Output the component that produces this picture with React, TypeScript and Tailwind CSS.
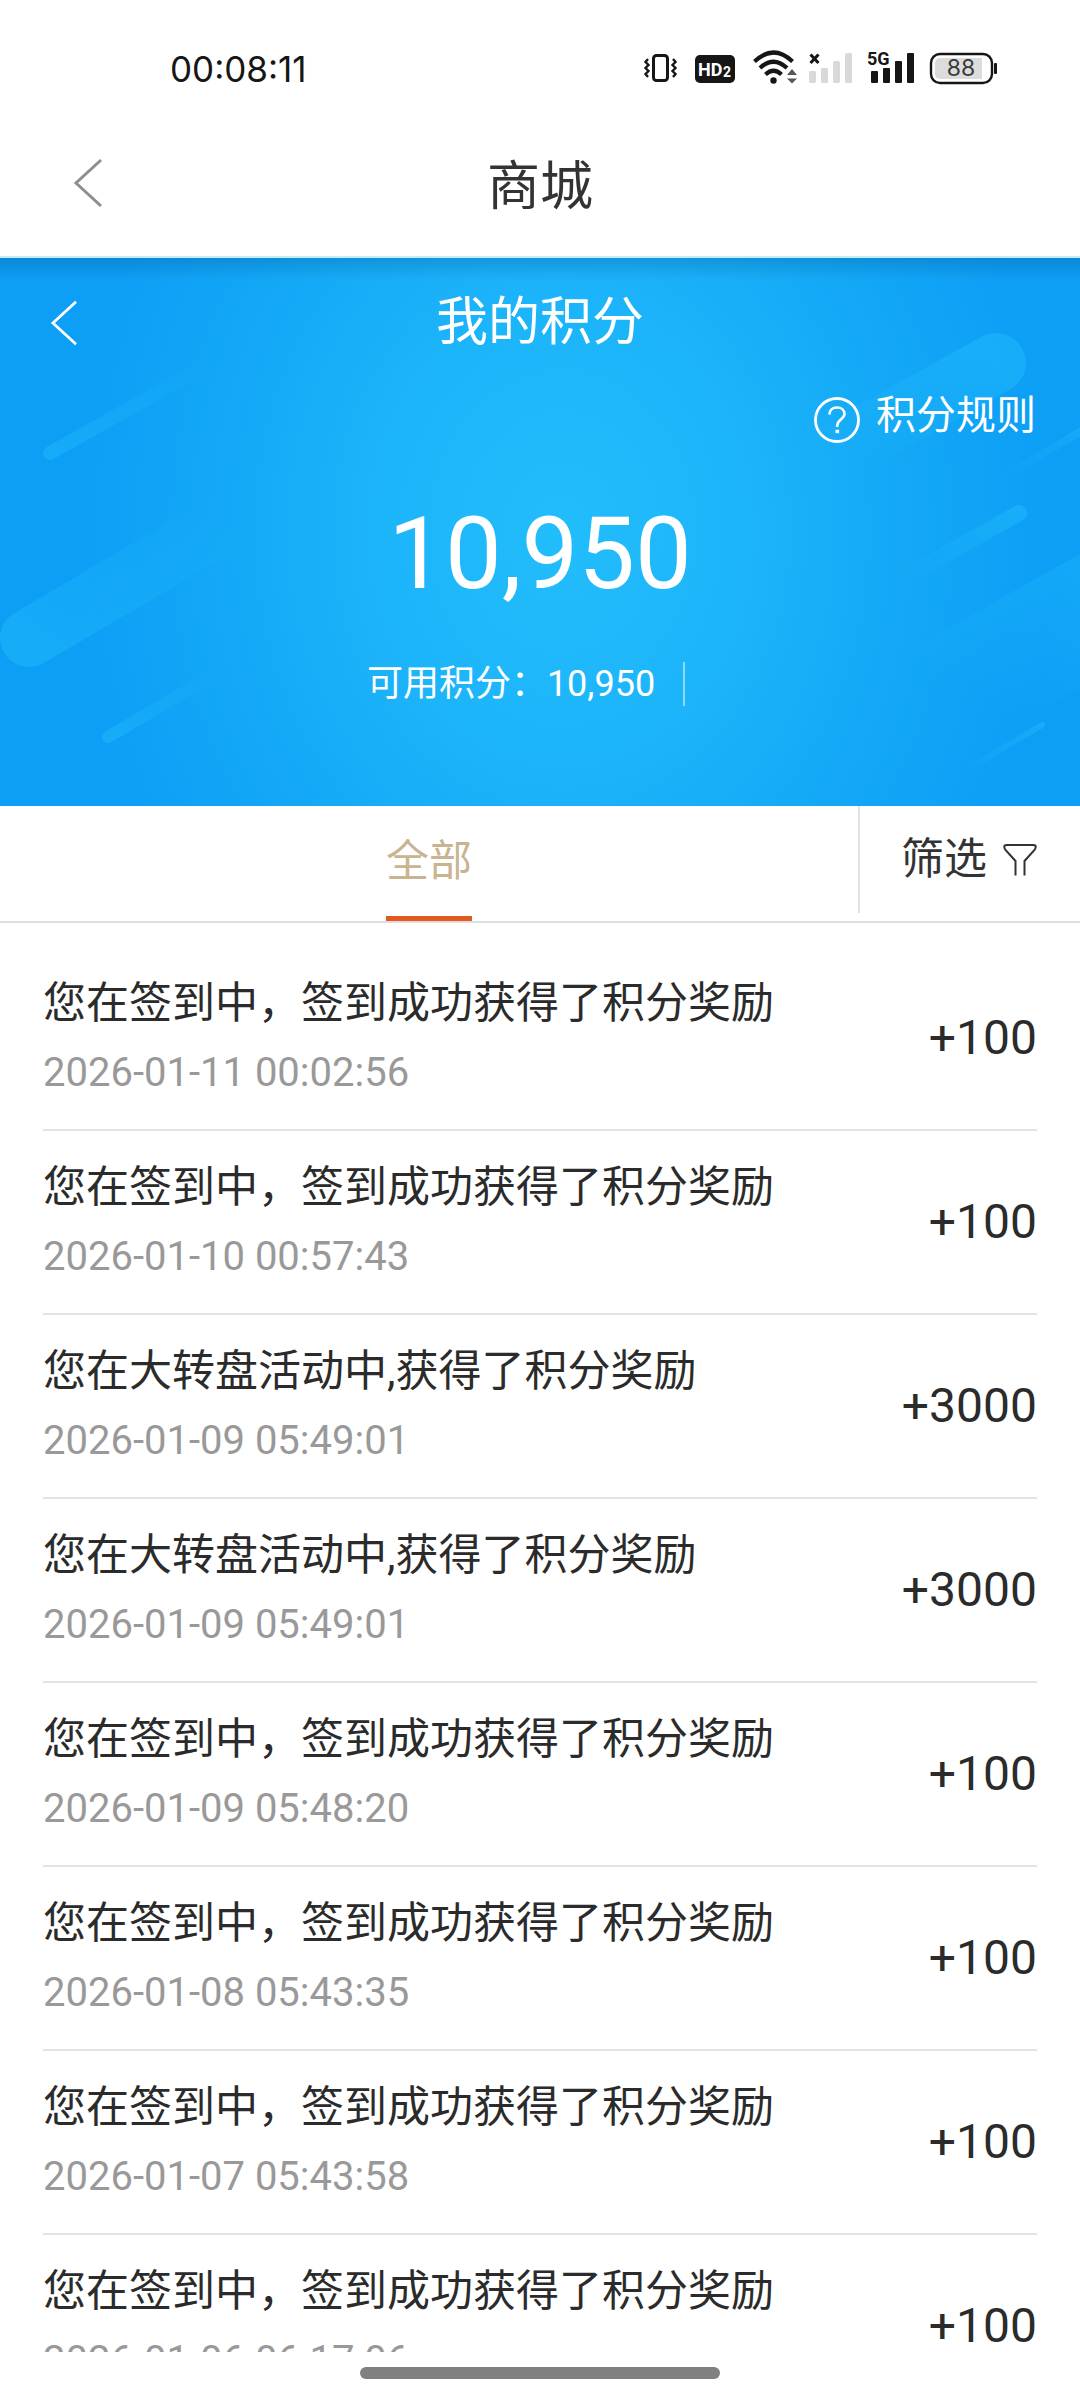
interface PointRecord {
  id: number;
  title: string;
  time: string;
  amount: number;
}

const SIGN_IN = '您在签到中，签到成功获得了积分奖励';
const WHEEL = '您在大转盘活动中,获得了积分奖励';

const records: PointRecord[] = [
  { id: 1, title: SIGN_IN, time: '2026-01-11 00:02:56', amount: 100 },
  { id: 2, title: SIGN_IN, time: '2026-01-10 00:57:43', amount: 100 },
  { id: 3, title: WHEEL, time: '2026-01-09 05:49:01', amount: 3000 },
  { id: 4, title: WHEEL, time: '2026-01-09 05:49:01', amount: 3000 },
  { id: 5, title: SIGN_IN, time: '2026-01-09 05:48:20', amount: 100 },
  { id: 6, title: SIGN_IN, time: '2026-01-08 05:43:35', amount: 100 },
  { id: 7, title: SIGN_IN, time: '2026-01-07 05:43:58', amount: 100 },
  { id: 8, title: SIGN_IN, time: '2026-01-06 06:17:06', amount: 100 },
];

function StatusIcons() {
  return (
    <svg width="356" height="36" viewBox="0 0 356 36" fill="#161616" className="overflow-visible" aria-hidden="true">
      {/* vibrate */}
      <rect x="9.5" y="5.5" width="14" height="25" rx="3" fill="none" stroke="#161616" strokeWidth="3" />
      <path
        d="M4 9l-2.500 3 3 3-3 3 3 3-3 3 2.500 3M29 9l2.500 3-3 3 3 3-3 3 3 3-2.500 3"
        fill="none"
        stroke="#161616"
        strokeWidth="2.4"
      />
      {/* HD2 */}
      <rect x="51" y="5" width="40" height="28" rx="5" />
      <text x="54" y="26" fill="#fff" fontSize="18" fontWeight="700" fontFamily="Roboto, sans-serif">
        HD
      </text>
      <text x="79" y="27" fill="#fff" fontSize="14" fontWeight="700" fontFamily="Roboto, sans-serif">
        2
      </text>
      {/* wifi */}
      <g fill="none" stroke="#161616" strokeWidth="4.2">
        <path d="M110.500 11.500Q129.500 -6.500 148.500 11.500" />
        <path d="M116 18Q129.500 5.500 143 18" />
        <path d="M121.500 24.500Q129.500 17 137.500 24.500" />
      </g>
      <circle cx="129.500" cy="30.500" r="3.200" />
      <path d="M143 25l5-6 5 6zM143 28.500h10l-5 5z" fill="#555" />
      {/* empty sim */}
      <path d="M166.500 4.500l8 8.500M174.500 4.500l-8 8.500" stroke="#161616" strokeWidth="3" />
      <g fill="#d9d9d9">
        <rect x="165" y="21" width="7" height="12" rx="1.5" />
        <rect x="177" y="18" width="7" height="15" rx="1.5" />
        <rect x="189" y="11" width="7" height="22" rx="1.5" />
        <rect x="201" y="3" width="7" height="30" rx="1.5" />
      </g>
      {/* 5G sim */}
      <text x="223" y="15" fontSize="18" fontWeight="700" fontFamily="Roboto, sans-serif">
        5G
      </text>
      <rect x="227" y="21" width="7" height="12" rx="1" />
      <rect x="239" y="18" width="7" height="15" rx="1" />
      <rect x="251" y="11" width="7" height="22" rx="1" />
      <rect x="263" y="3" width="7" height="30" rx="1" />
      {/* battery */}
      <rect x="287" y="4" width="61" height="29" rx="9" fill="none" stroke="#161616" strokeWidth="2.4" />
      <path d="M296 8h42v21h-42a5 5 0 0 1-5-5V13a5 5 0 0 1 5-5z" fill="#dcdcdc" />
      <rect x="350" y="13" width="3" height="11" rx="1" />
      <text x="317" y="26" textAnchor="middle" fontSize="23" fill="#3a3a3a" fontFamily="Inter, sans-serif">
        88
      </text>
    </svg>
  );
}

function BackIcon({ className }: { className: string }) {
  return (
    <svg width="32" height="52" viewBox="0 0 32 52" fill="none" className={className} aria-hidden="true">
      <path d="M29 3L4 26l25 23" stroke="currentColor" strokeWidth="3" />
    </svg>
  );
}

function BannerStreaks() {
  return (
    <svg
      className="absolute inset-0 h-full w-full"
      viewBox="0 0 1080 548"
      preserveAspectRatio="none"
      fill="none"
      strokeLinecap="round"
      aria-hidden="true"
    >
      <defs>
        <linearGradient id="streakLeft" x1="0" y1="1" x2="1" y2="0">
          <stop offset="0" stopColor="#22bdfb" stopOpacity="0.45" />
          <stop offset="1" stopColor="#22bdfb" stopOpacity="0" />
        </linearGradient>
        <linearGradient id="streakRight" x1="1" y1="0" x2="0" y2="1">
          <stop offset="0" stopColor="#22bdfb" stopOpacity="0.45" />
          <stop offset="1" stopColor="#22bdfb" stopOpacity="0" />
        </linearGradient>
      </defs>
      <g stroke="url(#streakLeft)">
        <path d="M50 195L205 108" strokeWidth="14" />
        <path d="M29 380L230 262" strokeWidth="58" />
        <path d="M108 479L220 413" strokeWidth="12" />
      </g>
      <g stroke="url(#streakRight)">
        <path d="M996 105L840 192" strokeWidth="60" />
        <path d="M1019 255L900 322" strokeWidth="16" />
        <path d="M1100 162L1005 218" strokeWidth="8" />
        <path d="M1120 340L960 430" strokeWidth="116" strokeOpacity="0.7" />
        <path d="M1042 467L965 513" strokeWidth="6" />
      </g>
    </svg>
  );
}

function Banner() {
  return (
    <section className="relative h-[548px] flex-none overflow-hidden bg-[radial-gradient(ellipse_46%_110%_at_52%_50%,#22bdfb_0%,#1db5fa_35%,#13a7f6_72%,#0d9ef6_100%)] text-white">
      <BannerStreaks />
      <div className="relative h-full bg-[linear-gradient(to_bottom,rgba(0,60,110,0.22)_0px,transparent_22px)]">
        <div className="flex h-[130px] items-center px-12">
          <button type="button" aria-label="返回" className="w-16">
            <BackIcon className="h-12" />
          </button>
          <h2 className="flex-1 text-center text-[52px] leading-16">我的积分</h2>
          <div className="w-16" />
        </div>
        <div className="flex justify-end pr-11">
          <button type="button" className="flex items-center gap-4 text-[40px] leading-14">
            <svg width="46" height="46" viewBox="0 0 46 46" fill="none" stroke="currentColor" className="mt-2" aria-hidden="true">
              <circle cx="23" cy="23" r="21.5" strokeWidth="2.8" />
              <path d="M15.500 17.500c0-4.500 3.300-7 7.500-7s7.500 2.600 7.500 6.500c0 5-7.300 5.500-7.300 11.500v1.500" strokeWidth="2.6" />
              <path d="M21.500 34.500h3.600" strokeWidth="3.4" />
            </svg>
            积分规则
          </button>
        </div>
        <p className="mt-[50px] text-center text-[101px] leading-[120px]">10,950</p>
        <div className="mt-12 flex justify-center">
          <p className="border-r-2 border-white/50 px-7 text-4xl leading-11">可用积分：10,950</p>
          <div className="px-7" />
        </div>
      </div>
    </section>
  );
}

function RecordItem({ record }: { record: PointRecord }) {
  return (
    <li className="flex h-46 items-center justify-between border-b-2 border-[#e2e2e2]">
      <div className="pb-1">
        <p className="text-[43px] leading-16 text-[#2b2b2b]">{record.title}</p>
        <p className="mt-2.5 text-[40px] leading-14 text-[#999]">{record.time}</p>
      </div>
      <span className="text-5xl text-[#2b2b2b]">{`+${record.amount}`}</span>
    </li>
  );
}

export default function App() {
  return (
    <div className="flex h-screen flex-col overflow-hidden bg-white font-[Roboto,'Noto_Sans_CJK_SC',sans-serif]">
      <div className="flex h-34 flex-none items-center justify-between pr-20 pl-[170px]">
        <span className="pt-0.5 font-[Inter,sans-serif] text-[35px] text-[#161616]">00:08:11</span>
        <StatusIcons />
      </div>

      <header className="flex h-[122px] flex-none items-center border-b-2 border-[#c5ecf8] px-18 pb-[18px]">
        <button type="button" aria-label="返回" className="w-16 pb-2">
          <BackIcon className="text-[#8e8e8e]" />
        </button>
        <h1 className="flex-1 text-center text-[53px] leading-16 text-[#333]">商城</h1>
        <div className="w-16" />
      </header>

      <Banner />

      <nav className="flex h-[117px] flex-none border-b-2 border-[#dedede] text-[43px]">
        <div className="flex flex-1 justify-center">
          <button type="button" className="border-b-5 border-[#e35a20] text-[#c9b491]">
            全部
          </button>
        </div>
        <button
          type="button"
          className="mb-2 flex w-[222px] items-center justify-end gap-4 border-l-2 border-[#e2e2e2] pr-[43px] text-[#333]"
        >
          筛选
          <svg width="34" height="34" viewBox="0 0 34 34" fill="none" stroke="currentColor" strokeWidth="2" aria-hidden="true">
            <path d="M12.500 32.500V18L2.500 7Q-0.500 2 3.500 2h27q4 0 1 5L21.500 18V32.500" />
          </svg>
        </button>
      </nav>

      <ul className="min-h-0 flex-1 overflow-hidden px-[43px] pt-6">
        {records.map((record) => (
          <RecordItem key={record.id} record={record} />
        ))}
      </ul>

      <div className="flex h-12 flex-none justify-center pt-[15px]">
        <div className="h-3 w-1/3 rounded-full bg-[#808080]" />
      </div>
    </div>
  );
}
